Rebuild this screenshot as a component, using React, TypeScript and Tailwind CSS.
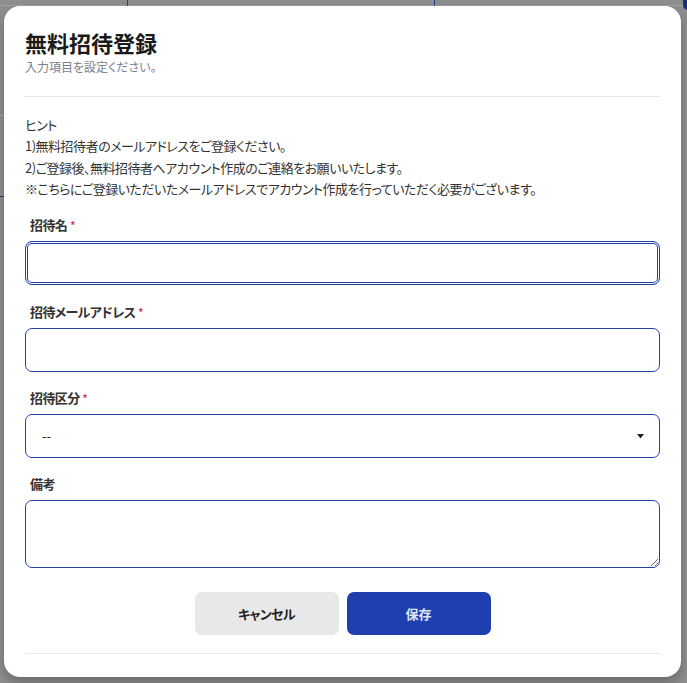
import { useState } from 'react';

const Label = ({ text, required }: { text: string; required?: boolean }) => (
    <label className="block pl-[5px] mb-[7px] text-[13px] leading-[18px] font-bold tracking-[-0.6px] text-[#333]">
        {text}
        {required && <span className="ml-[3px] text-[10px] text-[#d6336c] align-top">*</span>}
    </label>
);

const fieldBase = 'block w-full rounded-[7px] border border-[#2441a8] bg-white px-4 text-[13px] text-[#222] outline-none';

const App = () => {
    const [name, setName] = useState('');
    const [mail, setMail] = useState('');
    const [kind, setKind] = useState('');
    const [note, setNote] = useState('');

    return (
        <div className="relative h-[683px] w-[687px] overflow-hidden bg-[#8e8e8e] font-['Noto_Sans_CJK_JP','Noto_Sans',sans-serif] [font-feature-settings:'palt']">
            {/* page behind the overlay */}
            <div className="absolute left-0 top-0 h-[6px] w-full border-b border-[#a3a3a3]">
                <div className="absolute left-[127px] top-0 h-[6px] border-l border-[#2a3f8a]" />
                <div className="absolute left-[434px] top-0 h-[6px] border-l border-[#2a3f8a]" />
                <div className="absolute right-[-6px] top-[-6px] h-[16px] w-[10px] rounded-md bg-[#1b2f7a]" />
            </div>
            <div className="absolute left-0 top-[115px] w-[4px] border-t border-[#a9a9a9]" />
            <div className="absolute left-0 top-[196px] w-[4px] border-t border-[#2a3f8a]" />

            <div className="absolute left-[4px] top-[6px] flex h-[671px] w-[677px] flex-col rounded-[16px] bg-white px-[21px] pt-[22px] shadow-[0_6px_12px_rgba(0,0,0,0.25)]">
                <h1 className="text-[22px] leading-[28px] font-bold text-[#1a1a1a]">無料招待登録</h1>
                <p className="mt-[3px] text-[12px] leading-[16px] text-[#7b8190]">入力項目を設定ください。</p>
                <hr className="mt-[21px] border-t border-[#e5e7eb]" />

                <div className="mt-[17px] text-[13px] leading-[21.3px] tracking-[-0.5px] text-[#333]">
                    <p>ヒント</p>
                    <p>1)無料招待者のメールアドレスをご登録ください。</p>
                    <p>2)ご登録後、無料招待者へアカウント作成のご連絡をお願いいたします。</p>
                    <p>※こちらにご登録いただいたメールアドレスでアカウント作成を行っていただく必要がございます。</p>
                </div>

                <div className="mt-[17px]">
                    <Label text="招待名" required />
                    <input
                        value={name}
                        onChange={(e) => setName(e.target.value)}
                        className={`${fieldBase} h-[44px] shadow-[inset_0_0_0_1px_#fff,inset_0_0_0_2px_#2441a8]`}
                    />
                </div>

                <div className="mt-[18px]">
                    <Label text="招待メールアドレス" required />
                    <input value={mail} onChange={(e) => setMail(e.target.value)} className={`${fieldBase} h-[44px]`} />
                </div>

                <div className="mt-[17px]">
                    <Label text="招待区分" required />
                    <div className="relative">
                        <select
                            value={kind}
                            onChange={(e) => setKind(e.target.value)}
                            className={`${fieldBase} h-[44px] appearance-none`}
                        >
                            <option value="">--</option>
                        </select>
                        <svg className="pointer-events-none absolute right-[16px] top-[20px]" width="7" height="5" viewBox="0 0 7 5">
                            <path d="M0 0h7L3.5 4.5z" fill="#222" />
                        </svg>
                    </div>
                </div>

                <div className="mt-[17px]">
                    <Label text="備考" />
                    <textarea
                        value={note}
                        onChange={(e) => setNote(e.target.value)}
                        className={`${fieldBase} h-[68px] py-2`}
                    />
                </div>

                <div className="mt-[24px] flex justify-center gap-[8px]">
                    <button className="h-[43px] w-[144px] rounded-[7px] bg-[#e8e8e8] text-[13px] font-bold tracking-[-0.6px] text-[#222]">キャンセル</button>
                    <button className="h-[43px] w-[144px] rounded-[7px] bg-[#203fae] text-[13px] font-bold text-[#dfe4f3]">保存</button>
                </div>

                <hr className="mt-[18px] border-t border-[#e5e7eb]" />
            </div>
        </div>
    );
};

export default App;
